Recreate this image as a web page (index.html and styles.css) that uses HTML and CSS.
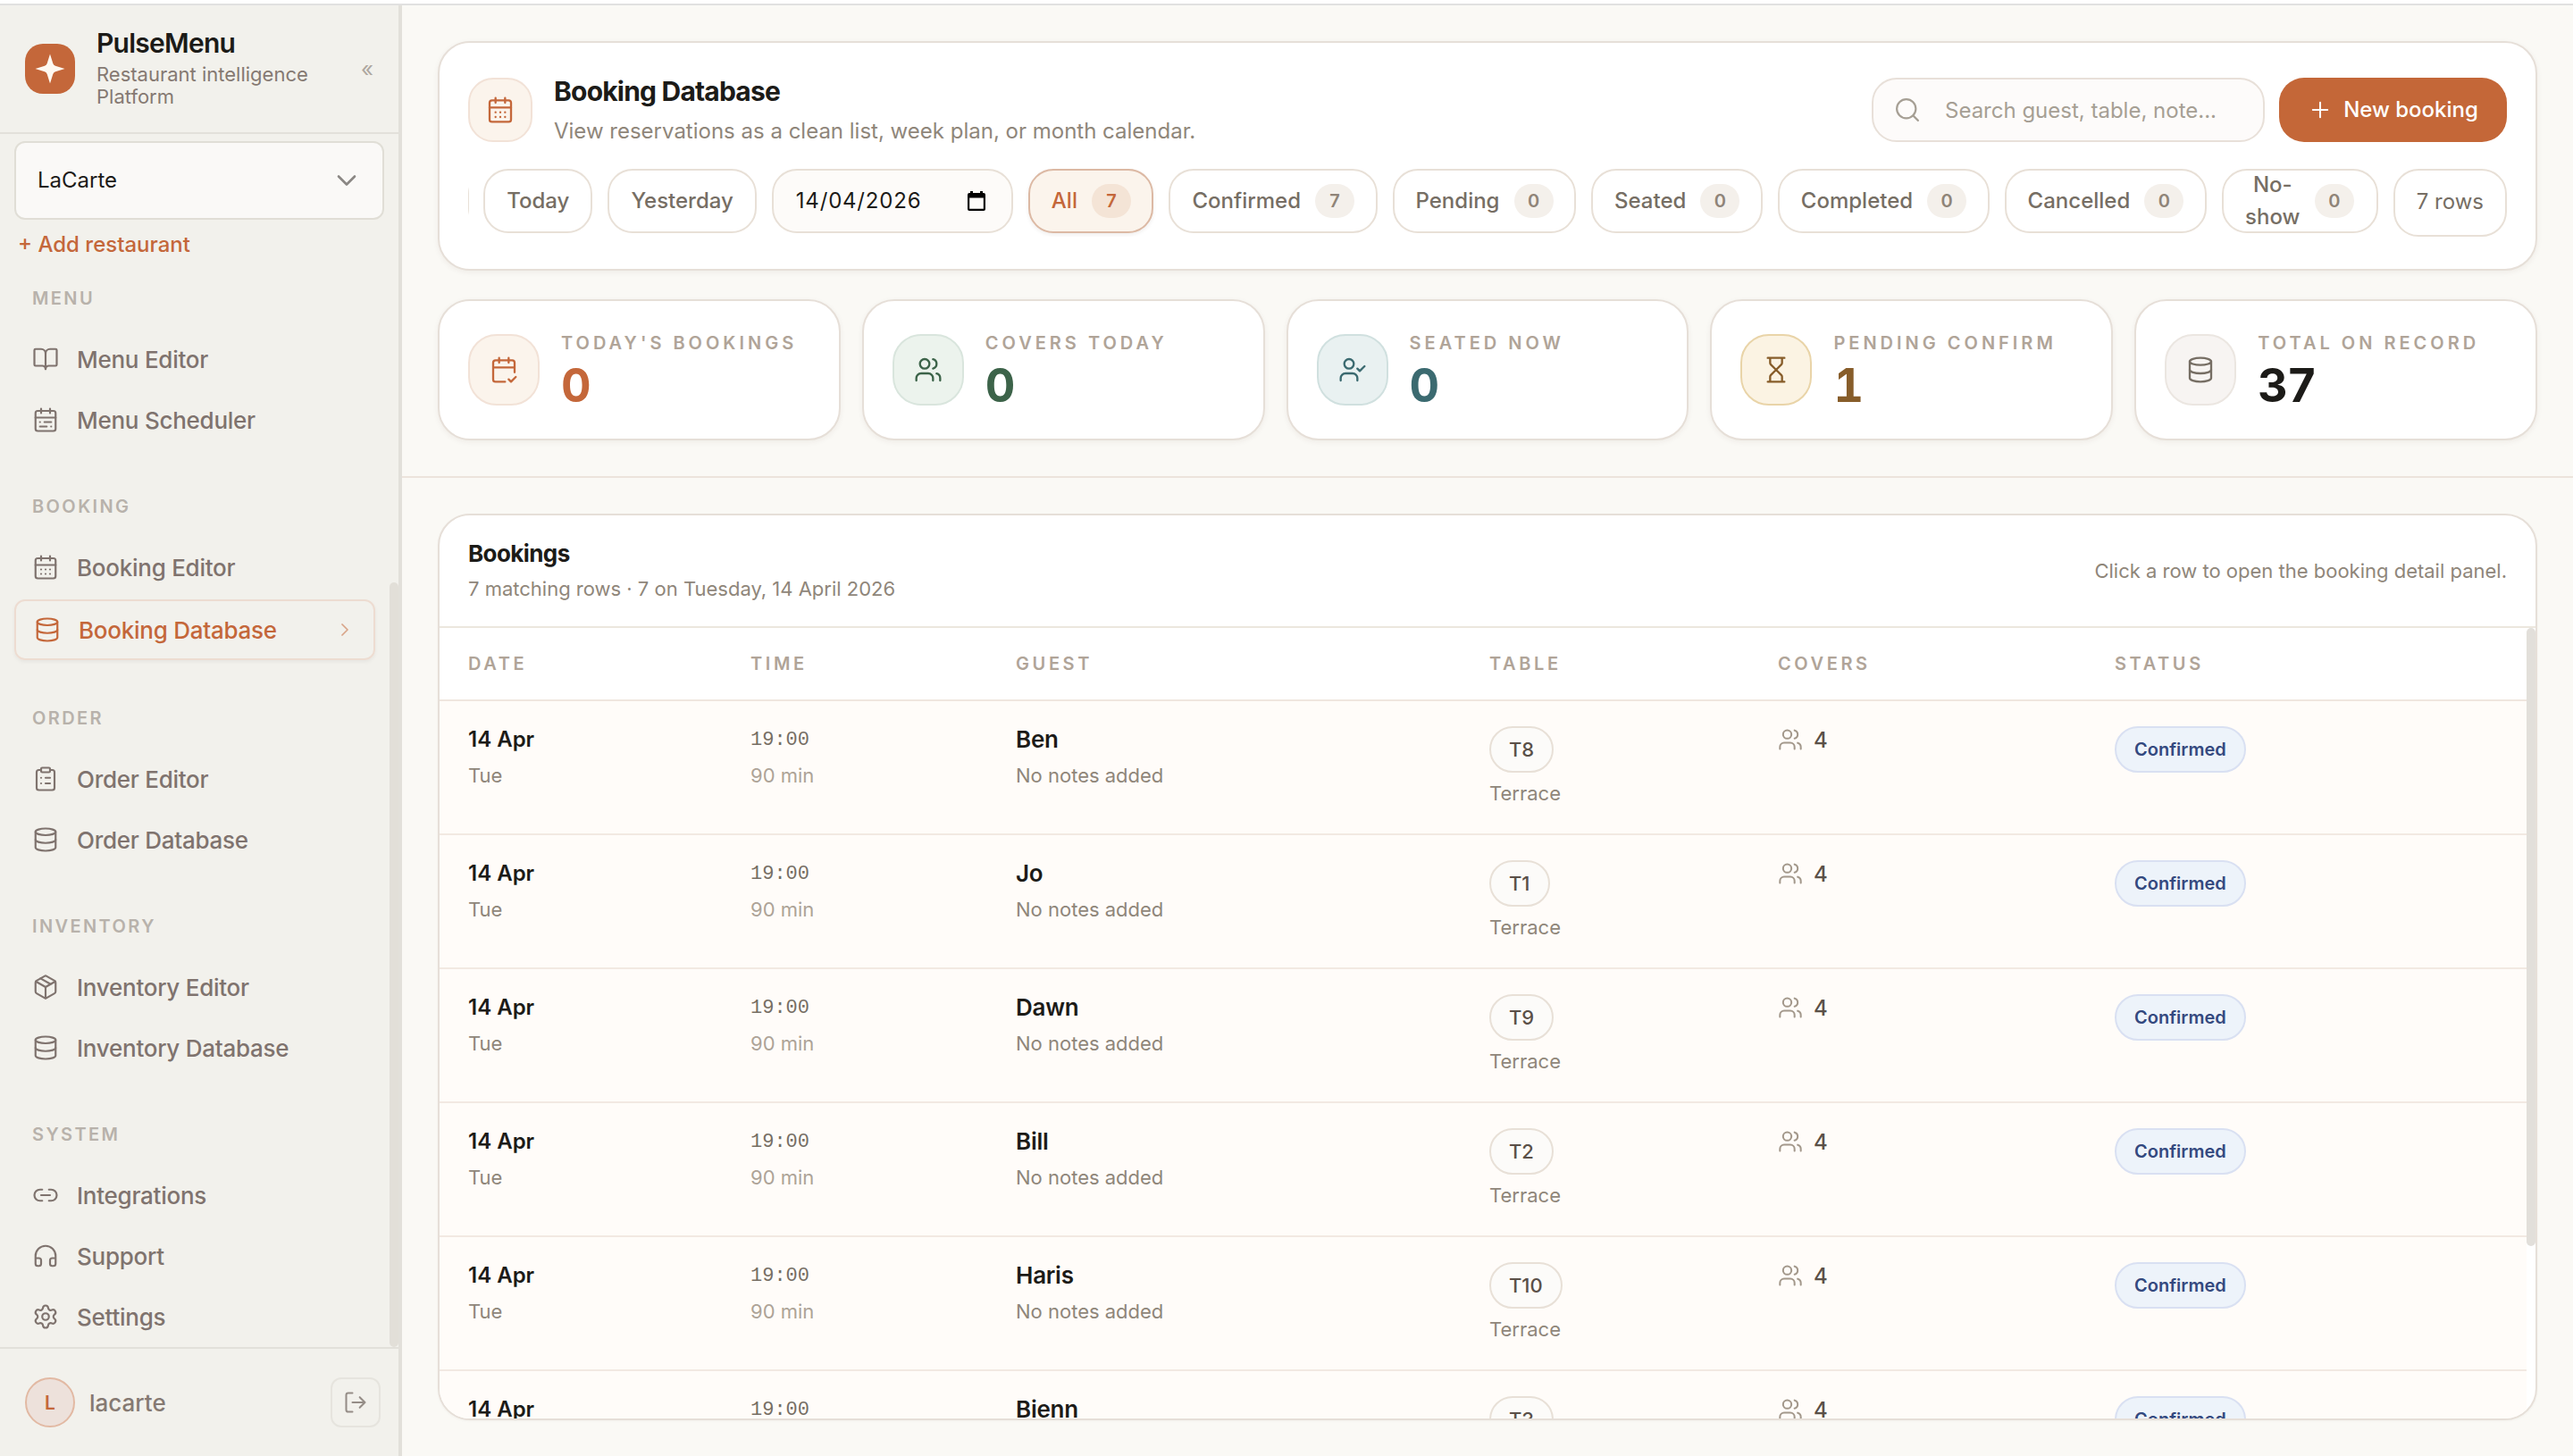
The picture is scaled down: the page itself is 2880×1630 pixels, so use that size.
FILE: index.html
```html
<!DOCTYPE html>
<html lang="en">
  <head>
    <meta charset="UTF-8" />
    <meta name="viewport" content="width=device-width, initial-scale=1.0" />
    <title>PulseMenu - Booking Database</title>
    <link rel="stylesheet" href="styles.css">
  </head>
  <body>
    <!-- icon set -->
    <svg class="icon-defs" width="0" height="0">
      <symbol id="i-book" viewBox="0 0 24 24"><path d="M12 7v14"/><path d="M3 18a1 1 0 0 1-1-1V4a1 1 0 0 1 1-1h5a4 4 0 0 1 4 4 4 4 0 0 1 4-4h5a1 1 0 0 1 1 1v13a1 1 0 0 1-1 1h-6a3 3 0 0 0-3 3 3 3 0 0 0-3-3z"/></symbol>
      <symbol id="i-range" viewBox="0 0 24 24"><rect width="18" height="18" x="3" y="4" rx="2"/><path d="M16 2v4M3 10h18M8 2v4M17 14h-6M13 18H7M7 14h.01M17 18h.01"/></symbol>
      <symbol id="i-calendar" viewBox="0 0 24 24"><rect width="18" height="18" x="3" y="4" rx="2"/><path d="M8 2v4M16 2v4M3 10h18M8 14h.01M12 14h.01M16 14h.01M8 18h.01M12 18h.01M16 18h.01"/></symbol>
      <symbol id="i-database" viewBox="0 0 24 24"><ellipse cx="12" cy="5" rx="9" ry="3"/><path d="M3 5V19A9 3 0 0 0 21 19V5"/><path d="M3 12A9 3 0 0 0 21 12"/></symbol>
      <symbol id="i-clipboard" viewBox="0 0 24 24"><rect width="8" height="4" x="8" y="2" rx="1"/><path d="M16 4h2a2 2 0 0 1 2 2v14a2 2 0 0 1-2 2H6a2 2 0 0 1-2-2V6a2 2 0 0 1 2-2h2M12 11h4M12 16h4M8 11h.01M8 16h.01"/></symbol>
      <symbol id="i-package" viewBox="0 0 24 24"><path d="M11 21.73a2 2 0 0 0 2 0l7-4A2 2 0 0 0 21 16V8a2 2 0 0 0-1-1.73l-7-4a2 2 0 0 0-2 0l-7 4A2 2 0 0 0 3 8v8a2 2 0 0 0 1 1.73z"/><path d="M12 22V12"/><path d="M3.29 7 12 12l8.71-5"/><path d="m7.5 4.27 9 5.15"/></symbol>
      <symbol id="i-link" viewBox="0 0 24 24"><path d="M9 17H7A5 5 0 0 1 7 7h2M15 7h2a5 5 0 1 1 0 10h-2M8 12h8"/></symbol>
      <symbol id="i-headphones" viewBox="0 0 24 24"><path d="M3 14h3a2 2 0 0 1 2 2v3a2 2 0 0 1-2 2H5a2 2 0 0 1-2-2v-7a9 9 0 0 1 18 0v7a2 2 0 0 1-2 2h-1a2 2 0 0 1-2-2v-3a2 2 0 0 1 2-2h3"/></symbol>
      <symbol id="i-settings" viewBox="0 0 24 24"><path d="M9.671 4.136a2.34 2.34 0 0 1 4.659 0 2.34 2.34 0 0 0 3.319 1.915 2.34 2.34 0 0 1 2.33 4.033 2.34 2.34 0 0 0 0 3.831 2.34 2.34 0 0 1-2.33 4.033 2.34 2.34 0 0 0-3.319 1.915 2.34 2.34 0 0 1-4.659 0 2.34 2.34 0 0 0-3.32-1.915 2.34 2.34 0 0 1-2.33-4.033 2.34 2.34 0 0 0 0-3.831A2.34 2.34 0 0 1 6.35 6.051a2.34 2.34 0 0 0 3.319-1.915"/><circle cx="12" cy="12" r="3"/></symbol>
      <symbol id="i-logout" viewBox="0 0 24 24"><path d="M9 21H5a2 2 0 0 1-2-2V5a2 2 0 0 1 2-2h4M16 17l5-5-5-5M21 12H9"/></symbol>
      <symbol id="i-chevron-down" viewBox="0 0 24 24"><path d="m6 9 6 6 6-6"/></symbol>
      <symbol id="i-chevron-right" viewBox="0 0 24 24"><path d="m9 18 6-6-6-6"/></symbol>
      <symbol id="i-search" viewBox="0 0 24 24"><circle cx="11" cy="11" r="8.5"/><path d="m21.5 21.5-4.4-4.4"/></symbol>
      <symbol id="i-plus" viewBox="0 0 24 24"><path d="M5 12h14M12 5v14"/></symbol>
      <symbol id="i-calendar-check" viewBox="0 0 24 24"><path d="M8 2v4M16 2v4M21 14V6a2 2 0 0 0-2-2H5a2 2 0 0 0-2 2v14a2 2 0 0 0 2 2h8M3 10h18M16 20l2 2 4-4"/></symbol>
      <symbol id="i-users" viewBox="0 0 24 24"><path d="M16 21v-2a4 4 0 0 0-4-4H6a4 4 0 0 0-4 4v2M22 21v-2a4 4 0 0 0-3-3.87M16 3.13a4 4 0 0 1 0 7.75"/><circle cx="9" cy="7" r="4"/></symbol>
      <symbol id="i-user-check" viewBox="0 0 24 24"><path d="m16 11 2 2 4-4M16 21v-2a4 4 0 0 0-4-4H6a4 4 0 0 0-4 4v2"/><circle cx="9" cy="7" r="4"/></symbol>
      <symbol id="i-hourglass" viewBox="0 0 24 24"><path d="M5 22h14M5 2h14M17 22v-4.172a2 2 0 0 0-.586-1.414L12 12l-4.414 4.414A2 2 0 0 0 7 17.828V22M7 2v4.172a2 2 0 0 0 .586 1.414L12 12l4.414-4.414A2 2 0 0 0 17 6.172V2"/></symbol>
    </svg>

    <div class="topline"></div>
    <div class="app">
      <aside class="sidebar">
        <div class="brand">
          <div class="brand-logo">
            <svg viewBox="0 0 34 34" width="34" height="34"><path d="M17 0.5 L20.3 11 Q21 13 23 13.7 L33.5 17 L23 20.3 Q21 21 20.3 23 L17 33.5 L13.7 23 Q13 21 11 20.3 L0.5 17 L11 13.7 Q13 13 13.7 11 Z" fill="#fff8f0"/></svg>
          </div>
          <div class="brand-text">
            <div class="brand-name">PulseMenu</div>
            <div class="brand-sub">Restaurant intelligence Platform</div>
          </div>
          <span class="collapse">«</span>
        </div>
        <div class="restaurant-select">
          <span>LaCarte</span>
          <svg class="icon"><use href="#i-chevron-down"/></svg>
        </div>
        <a class="add-restaurant">+ Add restaurant</a>

        <nav class="nav">
          <div class="nav-group">
            <div class="nav-label">MENU</div>
            <a class="nav-item"><svg class="icon"><use href="#i-book"/></svg>Menu Editor</a>
            <a class="nav-item"><svg class="icon"><use href="#i-range"/></svg>Menu Scheduler</a>
          </div>
          <div class="nav-group">
            <div class="nav-label">BOOKING</div>
            <a class="nav-item"><svg class="icon"><use href="#i-calendar"/></svg>Booking Editor</a>
            <a class="nav-item active"><svg class="icon"><use href="#i-database"/></svg>Booking Database<svg class="icon arrow"><use href="#i-chevron-right"/></svg></a>
          </div>
          <div class="nav-group">
            <div class="nav-label">ORDER</div>
            <a class="nav-item"><svg class="icon"><use href="#i-clipboard"/></svg>Order Editor</a>
            <a class="nav-item"><svg class="icon"><use href="#i-database"/></svg>Order Database</a>
          </div>
          <div class="nav-group">
            <div class="nav-label">INVENTORY</div>
            <a class="nav-item"><svg class="icon"><use href="#i-package"/></svg>Inventory Editor</a>
            <a class="nav-item"><svg class="icon"><use href="#i-database"/></svg>Inventory Database</a>
          </div>
          <div class="nav-group">
            <div class="nav-label">SYSTEM</div>
            <a class="nav-item"><svg class="icon"><use href="#i-link"/></svg>Integrations</a>
            <a class="nav-item"><svg class="icon"><use href="#i-headphones"/></svg>Support</a>
            <a class="nav-item"><svg class="icon"><use href="#i-settings"/></svg>Settings</a>
          </div>
        </nav>
        <div class="sidebar-thumb"></div>

        <div class="account">
          <span class="avatar">L</span>
          <span class="account-name">lacarte</span>
          <button class="logout"><svg class="icon"><use href="#i-logout"/></svg></button>
        </div>
      </aside>

      <main class="main">
        <section class="overview">
          <div class="card header-card">
            <div class="header-top">
              <div class="header-icon"><svg class="icon"><use href="#i-calendar"/></svg></div>
              <div class="header-text">
                <h1>Booking Database</h1>
                <p>View reservations as a clean list, week plan, or month calendar.</p>
              </div>
              <div class="search">
                <svg class="icon"><use href="#i-search"/></svg>
                <span>Search guest, table, note...</span>
              </div>
              <button class="new-booking"><svg class="icon"><use href="#i-plus"/></svg>New booking</button>
            </div>
            <div class="filters">
              <div class="filter-scroll">
                <button class="chip chip-prev"></button>
                <button class="chip">Today</button>
                <button class="chip">Yesterday</button>
                <div class="chip date">
                  <span>14/04/2026</span>
                  <svg width="20" height="22" viewBox="0 0 20 22"><path d="M3 0h3v2h8V0h3v2h1a2 2 0 0 1 2 2v16a2 2 0 0 1-2 2H2a2 2 0 0 1-2-2V4a2 2 0 0 1 2-2h1zM2.2 7.5v12.3h15.6V7.5z" fill="#000" fill-rule="evenodd"/></svg>
                </div>
                <button class="chip status-chip selected">All <span class="count">7</span></button>
                <button class="chip status-chip">Confirmed <span class="count">7</span></button>
                <button class="chip status-chip">Pending <span class="count">0</span></button>
                <button class="chip status-chip">Seated <span class="count">0</span></button>
                <button class="chip status-chip">Completed <span class="count">0</span></button>
                <button class="chip status-chip">Cancelled <span class="count">0</span></button>
                <button class="chip no-show"><span class="wrap">No-show</span> <span class="count">0</span></button>
              </div>
              <div class="chip rows-chip">7 rows</div>
            </div>
          </div>

          <div class="stats">
            <div class="card stat orange">
              <div class="stat-icon"><svg class="icon"><use href="#i-calendar-check"/></svg></div>
              <div class="stat-text"><div class="stat-label">TODAY'S BOOKINGS</div><div class="stat-value">0</div></div>
            </div>
            <div class="card stat green">
              <div class="stat-icon"><svg class="icon"><use href="#i-users"/></svg></div>
              <div class="stat-text"><div class="stat-label">COVERS TODAY</div><div class="stat-value">0</div></div>
            </div>
            <div class="card stat teal">
              <div class="stat-icon"><svg class="icon"><use href="#i-user-check"/></svg></div>
              <div class="stat-text"><div class="stat-label">SEATED NOW</div><div class="stat-value">0</div></div>
            </div>
            <div class="card stat amber">
              <div class="stat-icon"><svg class="icon"><use href="#i-hourglass"/></svg></div>
              <div class="stat-text"><div class="stat-label">PENDING CONFIRM</div><div class="stat-value">1</div></div>
            </div>
            <div class="card stat plain">
              <div class="stat-icon"><svg class="icon"><use href="#i-database"/></svg></div>
              <div class="stat-text"><div class="stat-label">TOTAL ON RECORD</div><div class="stat-value">37</div></div>
            </div>
          </div>
        </section>

        <section class="list">
          <div class="card bookings">
            <div class="bookings-head">
              <div>
                <h2>Bookings</h2>
                <p>7 matching rows · 7 on Tuesday, 14 April 2026</p>
              </div>
              <p class="hint">Click a row to open the booking detail panel.</p>
            </div>
            <div class="table-wrap">
              <table>
                <colgroup>
                  <col class="c-date"><col class="c-time"><col class="c-guest"><col class="c-table"><col class="c-covers"><col class="c-status">
                </colgroup>
                <thead>
                  <tr><th>DATE</th><th>TIME</th><th>GUEST</th><th>TABLE</th><th>COVERS</th><th>STATUS</th></tr>
                </thead>
                <tbody id="rows"></tbody>
              </table>
              <div class="table-thumb"></div>
            </div>
          </div>
        </section>
      </main>
    </div>

    <script>
      const bookings = [
        { guest: "Ben", table: "T8" },
        { guest: "Jo", table: "T1" },
        { guest: "Dawn", table: "T9" },
        { guest: "Bill", table: "T2" },
        { guest: "Haris", table: "T10" },
        { guest: "Bienn", table: "T3" },
      ];

      document.getElementById("rows").innerHTML = bookings
        .map(
          (b) => `
          <tr>
            <td><div class="strong">14 Apr</div><div class="sub">Tue</div></td>
            <td><div class="time">19:00</div><div class="sub light">90 min</div></td>
            <td><div class="strong guest">${b.guest}</div><div class="sub">No notes added</div></td>
            <td><span class="pill">${b.table}</span><div class="area">Terrace</div></td>
            <td><div class="covers"><svg class="icon"><use href="#i-users"/></svg>4</div></td>
            <td><span class="pill status">Confirmed</span></td>
          </tr>`
        )
        .join("");
    </script>
  </body>
</html>
```
FILE: styles.css
```css
* {
  box-sizing: border-box;
}
body {
  margin: 0;
  height: 1630px;
  display: flex;
  flex-direction: column;
  overflow: hidden;
  font-family: 'Inter', sans-serif;
  font-size: 24px;
  color: #1c1b18;
  background: #faf9f5;
}
h1, h2, p {
  margin: 0;
}
button {
  font: inherit;
  margin: 0;
}
.icon-defs {
  position: absolute;
}
.icon {
  width: 30px;
  height: 30px;
  flex: none;
  fill: none;
  stroke: currentColor;
  stroke-width: 1.75;
  stroke-linecap: round;
  stroke-linejoin: round;
}
.topline {
  flex: none;
  height: 6px;
  background: #fff;
  border-bottom: 2px solid #e1e1e0;
}
.app {
  flex: 1;
  display: flex;
  min-height: 0;
}

/* sidebar */
.sidebar {
  position: relative;
  flex: none;
  width: 450px;
  display: flex;
  flex-direction: column;
  background: #f2f1ec;
  border-right: 4px solid #e2e0da;
}
.brand {
  flex: none;
  height: 144px;
  padding: 0 28px;
  display: flex;
  align-items: center;
  border-bottom: 2px solid #e2e0da;
}
.brand-logo {
  width: 56px;
  height: 56px;
  border-radius: 20px;
  background: #c4673a;
  display: flex;
  align-items: center;
  justify-content: center;
}
.brand-text {
  margin-left: 24px;
  padding-bottom: 3px;
  width: 260px;
}
.brand-name {
  margin-bottom: 4px;
  margin-top: -1px;
  font-size: 30px;
  font-weight: 600;
  line-height: 38px;
  letter-spacing: -0.75px;
}
.brand-sub {
  font-size: 22px;
  line-height: 25px;
  color: #857972;
}
.collapse {
  margin-left: 36px;
  font-size: 24px;
  color: #aea7a0;
}
.restaurant-select {
  flex: none;
  margin: 8px 16px 0;
  height: 88px;
  padding: 0 22px 1px 24px;
  display: flex;
  align-items: center;
  justify-content: space-between;
  border: 2px solid #e0ded6;
  border-radius: 12px;
  background: #faf9f7;
}
.restaurant-select .icon {
  width: 36px;
  height: 36px;
  color: #8a8784;
}
.add-restaurant {
  flex: none;
  margin: 12px 0 0 20px;
  line-height: 32px;
  font-weight: 500;
  color: #c4673a;
}
.nav {
  flex: 1;
  min-height: 0;
  padding: 32px 26px 0 16px;
}
.nav-group {
  display: flex;
  flex-direction: column;
  gap: 4px;
  margin-bottom: 53px;
}
.nav-label {
  height: 24px;
  margin-bottom: 20px;
  padding-left: 20px;
  font-size: 20px;
  font-weight: 600;
  line-height: 24px;
  letter-spacing: 2.4px;
  color: #b8b2ab;
}
.nav-item {
  height: 64px;
  padding: 0 20px;
  display: flex;
  align-items: center;
  gap: 20px;
  font-size: 26px;
  font-weight: 500;
  letter-spacing: -0.26px;
  color: #7f736e;
}
.nav-item.active {
  height: 68px;
  border: 2px solid #eddcd1;
  border-radius: 12px;
  box-shadow: 0 2px 4px rgba(0, 0, 0, 0.05);
  color: #c4673a;
}
.nav-item .arrow {
  width: 24px;
  height: 24px;
  margin-left: auto;
  opacity: 0.55;
}
.sidebar-thumb {
  position: absolute;
  right: 0;
  top: 646px;
  width: 10px;
  height: 856px;
  border-radius: 5px;
  background: #e2dfd8;
}
.account {
  flex: none;
  height: 122px;
  padding: 0 20px 0 28px;
  display: flex;
  align-items: center;
  border-top: 2px solid #e2e0da;
}
.avatar {
  width: 56px;
  height: 56px;
  border: 2px solid #e2b9a3;
  border-radius: 50%;
  background: #ede1db;
  display: flex;
  align-items: center;
  justify-content: center;
  font-size: 21px;
  font-weight: 600;
  color: #c4673a;
}
.account-name {
  flex: 1;
  margin-left: 16px;
  font-size: 26px;
  font-weight: 500;
  color: #857972;
}
.logout {
  width: 56px;
  height: 56px;
  padding: 0;
  border: 2px solid #e6e4de;
  border-radius: 12px;
  background: none;
  display: flex;
  align-items: center;
  justify-content: center;
  color: #958d87;
}
.logout .icon {
  width: 28px;
  height: 28px;
}

/* main */
.main {
  flex: 1;
  min-width: 0;
  display: flex;
  flex-direction: column;
}
.card {
  background: #fff;
  border: 2px solid #e6dfd8;
  border-radius: 36px;
  box-shadow: 0 2px 6px rgba(60, 40, 20, 0.06);
}
.overview {
  flex: none;
  padding: 40px;
  border-bottom: 2px solid #ece4dc;
}
.header-card {
  padding: 36px 32px;
}
.header-top {
  height: 78px;
  margin-bottom: 27px;
  display: flex;
  align-items: center;
}
.header-icon {
  width: 72px;
  height: 72px;
  border: 2px solid #f2e2d7;
  border-radius: 28px;
  background: #fbf4ec;
  display: flex;
  align-items: center;
  justify-content: center;
  color: #c4673a;
}
.header-icon .icon {
  width: 32px;
  height: 32px;
}
.header-text {
  flex: 1;
  margin-left: 24px;
  padding-top: 2px;
}
.header-text h1 {
  font-size: 30px;
  font-weight: 700;
  line-height: 40px;
  letter-spacing: -0.8px;
}
.header-text p {
  margin-top: 6px;
  line-height: 38px;
  color: #8f867a;
}
.search {
  width: 440px;
  height: 72px;
  margin-right: 16px;
  padding-left: 23px;
  display: flex;
  align-items: center;
  gap: 27px;
  border: 2px solid #e8e0d9;
  border-radius: 28px;
  background: #fdfbfa;
  color: #a69f94;
}
.new-booking {
  width: 255px;
  height: 72px;
  padding: 0 0 1px;
  border: none;
  border-radius: 28px;
  background: #c46738;
  display: flex;
  align-items: center;
  justify-content: center;
  gap: 12px;
  font-weight: 500;
  color: #fff;
}
.new-booking .icon {
  width: 28px;
  height: 28px;
}
.filters {
  height: 76px;
  display: flex;
  gap: 17px;
}
.filter-scroll {
  flex: 1;
  min-width: 0;
  display: flex;
  justify-content: flex-end;
  gap: 17px;
  overflow: hidden;
}
.chip {
  flex: none;
  height: 72px;
  padding: 0 24px 1px;
  display: flex;
  align-items: center;
  gap: 16px;
  border: 2px solid #e8e0d7;
  border-radius: 28px;
  background: #fff;
  font-size: 24px;
  font-weight: 500;
  color: #766e64;
}
.status-chip {
  padding-right: 23.5px;
}
.chip-prev {
  width: 120px;
  margin-right: -1px;
}
.date {
  width: 270px;
  padding: 0 29px 1px 25px;
  justify-content: space-between;
  font-weight: 400;
  letter-spacing: 0.8px;
  background: #fdfbf9;
  color: #1c1b18;
}
.count {
  min-width: 44px;
  height: 38px;
  border-radius: 19px;
  background: #f4f0eb;
  display: flex;
  align-items: center;
  justify-content: center;
  font-size: 20px;
  font-weight: 600;
  color: #8f8478;
}
.selected {
  border-color: #dcb9a4;
  background: #fbf4ec;
  box-shadow: 0 2px 4px rgba(60, 40, 20, 0.08);
  color: #c4673a;
}
.selected .count {
  background: #f4e4d6;
  color: #c4673a;
}
.no-show {
  width: 175px;
}
.wrap {
  width: 62px;
  line-height: 36px;
  text-align: center;
}
.rows-chip {
  height: 76px;
  padding-bottom: 4px;
  font-weight: 400;
}
.stats {
  margin-top: 32px;
  display: grid;
  grid-template-columns: repeat(5, 1fr);
  gap: 24px;
}
.stat {
  height: 158px;
  padding: 0 32px;
  display: flex;
  align-items: center;
  gap: 24px;
}
.stat-icon {
  width: 80px;
  height: 80px;
  border: 2px solid;
  border-radius: 32px;
  display: flex;
  align-items: center;
  justify-content: center;
}
.stat-icon .icon {
  width: 32px;
  height: 32px;
}
.stat-text {
  padding-top: 3px;
}
.stat-label {
  font-size: 20px;
  font-weight: 600;
  line-height: 30px;
  letter-spacing: 4px;
  color: #b0a498;
}
.stat-value {
  margin-top: 3px;
  font-size: 52px;
  font-weight: 700;
  line-height: 60px;
  letter-spacing: -1px;
  font-variant-numeric: tabular-nums;
}
.orange .stat-icon { background: #fbf4ec; border-color: #f2e2d7; color: #c4673a; }
.orange .stat-value { color: #c4673a; }
.green .stat-icon { background: #ecf3ed; border-color: #d9e5dd; color: #3c6349; }
.green .stat-value { color: #3c6349; }
.teal .stat-icon { background: #e9f1f1; border-color: #d0e0df; color: #3b6a70; }
.teal .stat-value { color: #3b6a70; }
.amber .stat-icon { background: #fbf3e3; border-color: #e9d4a8; color: #875d2a; }
.amber .stat-value { color: #875d2a; }
.plain .stat-icon { background: #f7f4f2; border-color: #ebe6e1; color: #766e64; }

/* bookings list */
.list {
  flex: 1;
  min-height: 0;
  padding: 40px;
  display: flex;
}
.bookings {
  flex: 1;
  display: flex;
  flex-direction: column;
  overflow: hidden;
  box-shadow: 0 1px 3px rgba(60, 40, 20, 0.04);
}
.bookings-head {
  flex: none;
  height: 126px;
  padding: 0 32px;
  display: flex;
  align-items: center;
  justify-content: space-between;
  border-bottom: 2px solid #ece7de;
}
.bookings-head h2 {
  font-size: 26px;
  font-weight: 700;
  line-height: 36px;
  letter-spacing: -0.6px;
}
.bookings-head p {
  margin-top: 3px;
  font-size: 22px;
  line-height: 36px;
  color: #8f867a;
}
.bookings-head .hint {
  margin: 0;
}
.table-wrap {
  position: relative;
  flex: 1;
  min-height: 0;
  padding-right: 10px;
  overflow: hidden;
}
table {
  width: 2336px;
  table-layout: fixed;
  border-collapse: separate;
  border-spacing: 0;
}
.c-date { width: 316px; }
.c-time { width: 297px; }
.c-guest { width: 530px; }
.c-table { width: 323px; }
.c-covers { width: 377px; }
.c-status { width: 493px; }
th {
  height: 82px;
  padding: 0 32px;
  border-bottom: 2px solid #f0e6df;
  text-align: left;
  font-size: 20px;
  font-weight: 600;
  letter-spacing: 3.6px;
  color: #b0a498;
}
td {
  height: 150px;
  padding: 28px 32px 0;
  border-bottom: 2px solid #f2e9e2;
  vertical-align: top;
  background: #fffcf9;
}
.strong {
  font-weight: 600;
  line-height: 30px;
}
.guest {
  font-size: 26px;
  letter-spacing: -0.26px;
}
.sub {
  margin-top: 10px;
  font-size: 22px;
  line-height: 30px;
  color: #8f867a;
}
.light {
  color: #ada397;
}
.time {
  padding-top: 1px;
  font-family: 'Liberation Mono', monospace;
  font-size: 22px;
  line-height: 29px;
  color: #766e64;
}
.pill {
  height: 52px;
  padding: 0 20px;
  display: inline-flex;
  align-items: center;
  border: 2px solid #e8e0d7;
  border-radius: 26px;
  background: #fcfbf9;
  font-size: 22px;
  font-weight: 500;
  color: #5a5048;
  vertical-align: top;
}
.status {
  border-color: #d9e0f2;
  background: #edf3fa;
  font-size: 20px;
  font-weight: 600;
  color: #34497f;
}
.area {
  margin-top: 8px;
  font-size: 22px;
  line-height: 30px;
  color: #8f867a;
}
.covers {
  display: flex;
  align-items: center;
  gap: 12px;
  height: 30px;
  font-weight: 500;
  color: #5a5048;
}
.covers .icon {
  width: 28px;
  height: 28px;
  color: #a3988b;
}
.table-thumb {
  position: absolute;
  top: 0;
  right: 0;
  width: 10px;
  height: 692px;
  border-radius: 5px;
  background: #e2dfda;
}
```
